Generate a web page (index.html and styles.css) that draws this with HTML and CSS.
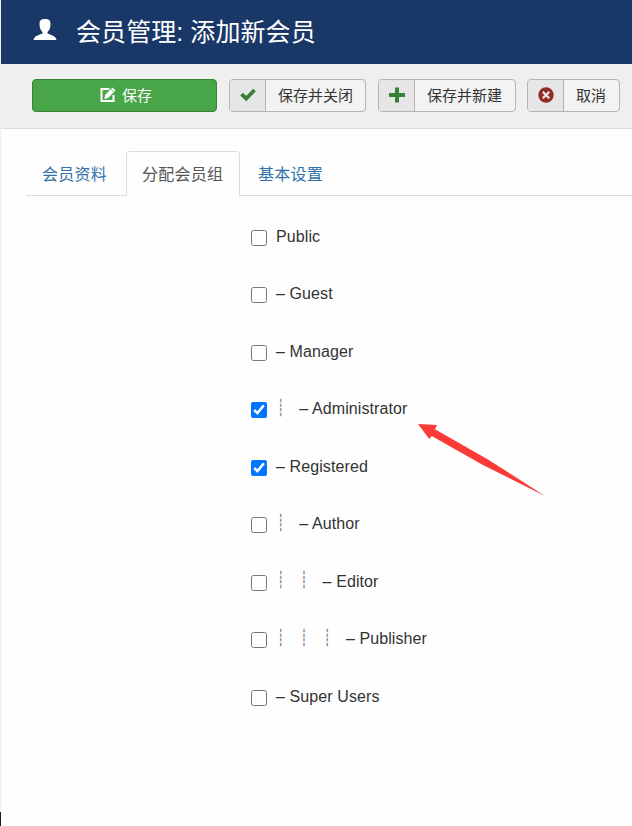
FILE: index.html
```html
<!DOCTYPE html>
<html lang="zh-CN">
<head>
<meta charset="utf-8">
<title>会员管理: 添加新会员</title>
<link rel="stylesheet" href="styles.css">
</head>
<body>
<header class="header">
  <svg class="user-icon" viewBox="0 0 24 22" aria-hidden="true"><path fill="#fff" d="M12 0C8.500 0 6.500 1 6.500 5C6.500 8.500 7.500 11.500 9.500 13V14.500C6 16 1 17 .5 21H23.500C23 17 18 16 14.500 14.500V13C16.500 11.500 17.500 8.500 17.500 5C17.500 1 15.500 0 12 0Z"/></svg>
  <h1 class="title">会员管理: 添加新会员</h1>
</header>
<div class="toolbar">
  <button class="btn btn-save">
    <svg class="edit-icon" viewBox="0 0 16 16" aria-hidden="true"><path fill="none" stroke="#fff" stroke-width="2" d="M9.500 2H1.500V14H13.500V8"/><path fill="#fff" d="M5 8L12.500.5L15.500 3.500L8 11L4.500 12Z"/><path stroke="#48a648" stroke-width=".8" d="M11 2.300L14 5"/></svg>
    <span>保存</span>
  </button>
  <button class="btn btn-close">
    <span class="btn-icon"><svg viewBox="0 0 16 16"><path fill="none" stroke="#378137" stroke-width="3.800" d="M1.500 7.200L6.200 11.500L14.500 3"/></svg></span>
    <span class="btn-label">保存并关闭</span>
  </button>
  <button class="btn btn-new">
    <span class="btn-icon"><svg viewBox="0 0 16 16"><path fill="none" stroke="#378137" stroke-width="4" d="M0 8H16M8 .5V15.500"/></svg></span>
    <span class="btn-label">保存并新建</span>
  </button>
  <button class="btn btn-cancel">
    <span class="btn-icon"><svg viewBox="0 0 16 16"><circle cx="8" cy="8" r="7.700" fill="#942a25"/><path fill="none" stroke="#e6e6e6" stroke-width="2.300" d="M4.800 4.800L11.200 11.200M11.200 4.800L4.800 11.200"/></svg></span>
    <span class="btn-label">取消</span>
  </button>
</div>
<nav class="tabs">
  <a class="tab">会员资料</a>
  <a class="tab active">分配会员组</a>
  <a class="tab">基本设置</a>
</nav>
<main class="groups">
  <label class="row"><input type="checkbox"><span>Public</span></label>
  <label class="row"><input type="checkbox"><span>– Guest</span></label>
  <label class="row"><input type="checkbox"><span>– Manager</span></label>
  <label class="row"><input type="checkbox" checked><i class="level">┊</i><span>– Administrator</span></label>
  <label class="row"><input type="checkbox" checked><span>– Registered</span></label>
  <label class="row"><input type="checkbox"><i class="level">┊</i><span>– Author</span></label>
  <label class="row"><input type="checkbox"><i class="level">┊</i><i class="level">┊</i><span>– Editor</span></label>
  <label class="row"><input type="checkbox"><i class="level">┊</i><i class="level">┊</i><i class="level">┊</i><span>– Publisher</span></label>
  <label class="row"><input type="checkbox"><span>– Super Users</span></label>
</main>
<svg class="arrow" viewBox="0 0 128 74" aria-hidden="true"><path fill="#fc3a38" d="M0 0L19 1L17 5.300L70 35.500L127 72L64 40.500L13.700 12L11.300 15Z"/></svg>
<div class="edge"></div>
</body>
</html>
```
FILE: styles.css
```css
* { box-sizing: border-box; }
body {
  margin: 0;
  height: 826px;
  overflow: hidden;
  position: relative;
  padding-left: 1px;
  background: #fefefe;
  color: #333;
  font-family: "Liberation Sans", "Noto Sans CJK SC", sans-serif;
  font-size: 16px;
}
.header {
  height: 64px;
  background: #1a3867;
  display: flex;
  align-items: center;
  padding-left: 32px;
}
.user-icon { width: 24px; height: 22px; margin-bottom: 4px; }
.title {
  margin: 0 0 0 19px;
  color: #fff;
  font-size: 25px;
  font-weight: 400;
  line-height: 64px;
  letter-spacing: 0.08px;
}
.toolbar {
  height: 65px;
  background: #efefef;
  border-bottom: 1px solid #dcdcdc;
  display: flex;
  padding: 15px 0 0 31px;
}
.btn {
  height: 33px;
  padding: 0;
  display: flex;
  align-items: center;
  border: 1px solid #b3b3b3;
  border-radius: 4px;
  background: #f3f3f3;
  color: #333;
  font: 15px/31px "Liberation Sans", "Noto Sans CJK SC", sans-serif;
  overflow: hidden;
}
.btn-save {
  width: 185px;
  margin-right: 12px;
  padding-left: 3px;
  justify-content: center;
  gap: 6px;
  background: #48a648;
  border-color: #398439;
  color: #fff;
}
.edit-icon { width: 16px; height: 16px; margin-bottom: 1px; }
.btn-close { width: 137px; margin-right: 12px; }
.btn-new { width: 138px; margin-right: 11px; }
.btn-cancel { width: 93px; }
.btn-icon {
  flex: none;
  width: 36px;
  height: 31px;
  display: flex;
  align-items: center;
  justify-content: center;
  background: #e6e6e6;
  border-right: 1px solid #b3b3b3;
}
.btn-icon svg { width: 16px; height: 16px; margin-bottom: 1px; }
.btn-label { padding-left: 12px; white-space: nowrap; }
.tabs {
  display: flex;
  margin: 22px 0 0 25px;
  height: 45px;
  border-bottom: 1px solid #ddd;
}
.tab {
  height: 45px;
  padding: 0 17px;
  border: 1px solid transparent;
  line-height: 45px;
  color: #3071a9;
  white-space: nowrap;
  letter-spacing: 0.25px;
}
.tab:first-child { width: 100px; padding: 0 0 0 15px; }
.tab.active {
  width: 114px;
  padding: 0 0 0 15px;
  color: #555;
  background: #fefefe;
  border-color: #ddd;
  border-bottom-color: #fefefe;
  border-radius: 4px 4px 0 0;
}
.groups { padding: 12px 0 0 250px; }
.row {
  display: flex;
  align-items: center;
  height: 57.5px;
  white-space: nowrap;
  letter-spacing: 0.1px;
}
.row input {
  width: 16px;
  height: 16px;
  margin: 2px 9px 0 0;
}
.level {
  width: 23.3px;
  margin-bottom: 4px;
  color: #888;
  font: normal 16px/19px "DejaVu Sans Mono", monospace;
}
.arrow {
  position: absolute;
  left: 418px;
  top: 424px;
  width: 128px;
  height: 74px;
}
.edge {
  position: absolute;
  left: 0;
  top: 0;
  width: 1px;
  height: 826px;
  background: linear-gradient(#f0f0f0 812px, #1c1c1c 812px);
}
```
